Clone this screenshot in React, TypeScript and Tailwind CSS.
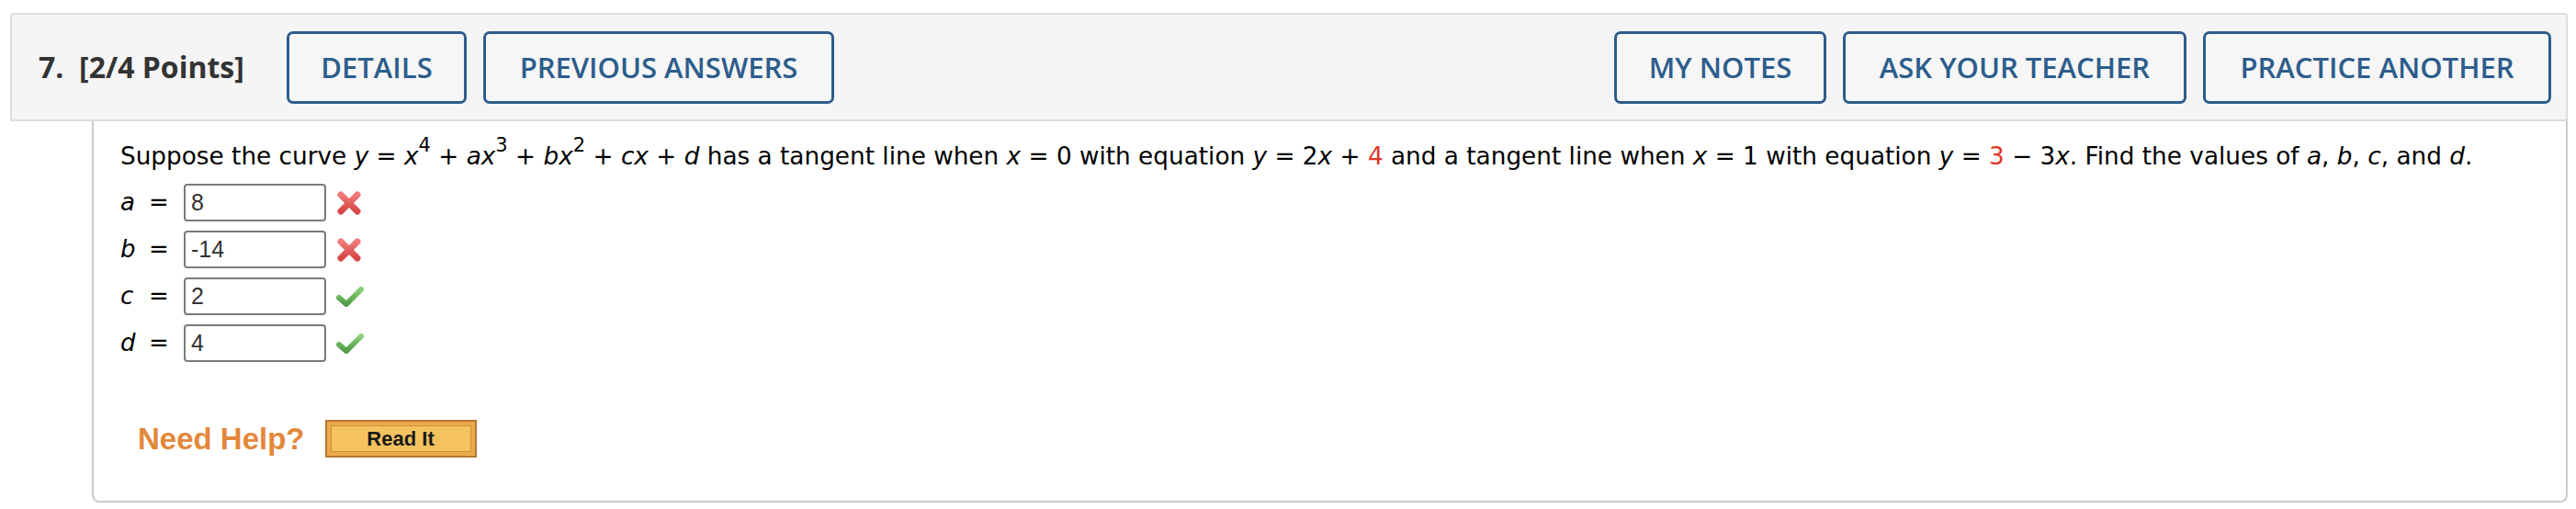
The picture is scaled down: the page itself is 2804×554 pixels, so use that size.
import { ReactNode } from "react";

const verdana = { fontFamily: '"DejaVu Sans", Verdana, sans-serif' };

function HeadButton({ label, w }: { label: string; w: string }) {
  return (
    <button
      className={`${w} h-[79px] rounded-[7px] border-[3px] border-[#2c5d8c] bg-[#f6f6f6] text-[31px] font-semibold text-[#2c5d8c] flex items-center justify-center`}
    >
      {label}
    </button>
  );
}

function Wrong() {
  return (
    <svg width="28" height="26" viewBox="0 0 28 26">
      <defs>
        <linearGradient id="rx" x1="0" y1="0" x2="0" y2="1">
          <stop offset="0" stopColor="#f07a7a" />
          <stop offset="1" stopColor="#d94545" />
        </linearGradient>
      </defs>
      <path d="M5 4 L23 22 M23 4 L5 22" stroke="url(#rx)" strokeWidth="7" strokeLinecap="round" />
    </svg>
  );
}

function Right() {
  return (
    <svg width="30" height="26" viewBox="0 0 30 26">
      <defs>
        <linearGradient id="gc" x1="0" y1="0" x2="0" y2="1">
          <stop offset="0" stopColor="#8ccf7a" />
          <stop offset="1" stopColor="#4f9c43" />
        </linearGradient>
      </defs>
      <path d="M3 14 L11 21 L27 5" fill="none" stroke="url(#gc)" strokeWidth="6" strokeLinecap="round" strokeLinejoin="round" />
    </svg>
  );
}

function Row({ v, val, ok }: { v: string; val: string; ok: boolean }) {
  return (
    <div className="flex items-center h-[41px]">
      <span className="w-[31px] italic text-[26px] text-black" style={verdana}>
        {v}
      </span>
      <span className="w-[38px] text-[26px] text-black" style={verdana}>
        =
      </span>
      <div
        className="w-[155px] h-[41px] rounded-[4px] border-2 border-[#7a7a7a] bg-white px-[6px] flex items-center text-[25px] text-[#333]"
        style={{ fontFamily: '"Liberation Sans", Arial, sans-serif' }}
      >
        {val}
      </div>
      <span className="ml-[11px] flex items-center">{ok ? <Right /> : <Wrong />}</span>
    </div>
  );
}

const I = ({ children }: { children: ReactNode }) => <i>{children}</i>;
const Sup = ({ children }: { children: ReactNode }) => (
  <sup className="text-[21px] top-[-14px]">{children}</sup>
);
const Red = ({ children }: { children: ReactNode }) => (
  <span className="text-[#e0372b]">{children}</span>
);

export default function App() {
  return (
    <div className="w-[2804px] h-[554px] bg-white pt-[14px]" style={{ fontFamily: '"Open Sans", sans-serif' }}>
      <div className="ml-[11px] mr-[9px] h-[118px] rounded-t-[4px] border-2 border-[#dcdcdc] bg-[#f5f5f5] flex items-center pl-[29px] pr-[16px]">
        <span className="text-[32px] font-bold text-[#333] whitespace-pre w-[270px]">7.  [2/4 Points]</span>
        <div className="flex gap-[18px]">
          <HeadButton label="DETAILS" w="w-[196px]" />
          <HeadButton label="PREVIOUS ANSWERS" w="w-[382px]" />
        </div>
        <div className="flex-1" />
        <div className="flex gap-[18px]">
          <HeadButton label="MY NOTES" w="w-[231px]" />
          <HeadButton label="ASK YOUR TEACHER" w="w-[374px]" />
          <HeadButton label="PRACTICE ANOTHER" w="w-[379px]" />
        </div>
      </div>

      <div className="ml-[100px] mr-[9px] h-[415px] border-2 border-t-0 border-[#cccccc] rounded-b-[8px] bg-white pl-[29px] pt-[20px]">
        <p className="text-[26.3px] text-black leading-[36px] whitespace-nowrap" style={verdana}>
          Suppose the curve <I>y</I> = <I>x</I>
          <Sup>4</Sup> + <I>ax</I>
          <Sup>3</Sup> + <I>bx</I>
          <Sup>2</Sup> + <I>cx</I> + <I>d</I> has a tangent line when <I>x</I> = 0 with
          equation <I>y</I> = 2<I>x</I> + <Red>4</Red> and a tangent line when <I>x</I> = 1 with equation{" "}
          <I>y</I> = <Red>3</Red> − 3<I>x</I>. Find the values of <I>a</I>, <I>b</I>, <I>c</I>, and <I>d</I>.
        </p>
        <div className="mt-[12px] flex flex-col gap-[10px]">
          <Row v="a" val="8" ok={false} />
          <Row v="b" val="-14" ok={false} />
          <Row v="c" val="2" ok={true} />
          <Row v="d" val="4" ok={true} />
        </div>
        <div className="mt-[59px] ml-[19px] flex items-center gap-[22px]">
          <span
            className="text-[33px] font-bold text-[#e3883a]"
            style={{ fontFamily: '"Liberation Sans", Arial, sans-serif' }}
          >
            Need Help?
          </span>
          <button className="w-[165px] h-[41px] border-2 border-[#b47832] bg-[#eda94a] p-[4px]">
            <div
              className="w-full h-full border border-[#c9913f] bg-[#f4c25f] flex items-center justify-center text-[22px] font-bold text-[#1a1a1a]"
              style={{ fontFamily: '"Liberation Sans", Arial, sans-serif' }}
            >
              Read It
            </div>
          </button>
        </div>
      </div>
    </div>
  );
}
